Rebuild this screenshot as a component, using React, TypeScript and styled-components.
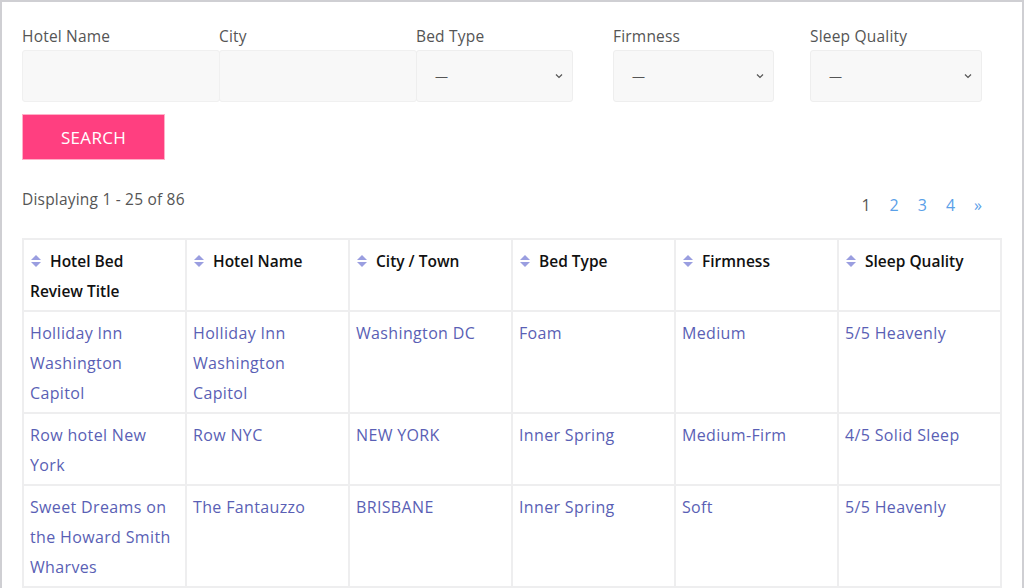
import * as React from 'react'
import styled, { createGlobalStyle } from 'styled-components'

const Global = createGlobalStyle`
  html, body { margin: 0; padding: 0; background: #fff; }
  body { font-family: "Open Sans", "Noto Sans", sans-serif; }
`

const Frame = styled.div`
  width: 1024px;
  height: 588px;
  box-sizing: border-box;
  border: 2px solid #cfcfd3;
  border-bottom: none;
  padding: 20px 20px 0 20px;
  overflow: hidden;
`

const Filters = styled.div`
  display: grid;
  grid-template-columns: repeat(5, 197px);
`

const Field = styled.div`
  display: flex;
  flex-direction: column;
`

const Label = styled.label`
  font-size: 15.5px;
  letter-spacing: 0.2px;
  color: #555;
  height: 28px;
  line-height: 28px;
`

const TextInput = styled.div`
  height: 52px;
  width: 198px;
  background: #f8f8f8;
  border: 1px solid #f0f0f0;
  border-radius: 3px;
  box-sizing: border-box;
`

const Select = styled.div<{ $w: number }>`
  height: 52px;
  width: ${p => p.$w}px;
  background: #f8f8f8;
  border: 1px solid #eee;
  border-radius: 3px;
  box-sizing: border-box;
  display: flex;
  align-items: center;
  justify-content: space-between;
  padding: 0 8px 0 18px;
  color: #555;
  font-size: 13px;
`

const SearchButton = styled.button`
  margin-top: 12px;
  width: 143px;
  height: 46px;
  background: #ff3f80;
  color: #fff;
  border: 1px solid #ffb0c8;
  font-family: inherit;
  font-size: 17px;
  font-weight: 500;
  letter-spacing: 0.3px;
`

const InfoRow = styled.div`
  display: flex;
  justify-content: space-between;
  align-items: flex-start;
  margin-top: 28px;
  width: 960px;
`

const Info = styled.div`
  font-size: 15.5px;
  letter-spacing: 0.2px;
  color: #555;
`

const Pager = styled.div`
  display: flex;
  gap: 19px;
  margin-top: 6px;
  font-size: 16px;
`

const Page = styled.span<{ $current?: boolean }>`
  color: ${p => (p.$current ? '#555' : '#5aa0e8')};
`

const Table = styled.table`
  margin-top: 22px;
  width: 980px;
  border-collapse: collapse;
  table-layout: fixed;
`

const Th = styled.th`
  border: 2px solid #eeeeef;
  text-align: left;
  vertical-align: top;
  padding: 6px 6px 4px 6px;
  font-size: 15.5px;
  font-weight: 600;
  color: #111;
  line-height: 30px;
  height: 71px;
  box-sizing: border-box;
`

const Td = styled.td`
  border: 2px solid #eeeeef;
  vertical-align: top;
  padding: 6px 6px 4px 6px;
  font-size: 16px;
  letter-spacing: 0.35px;
  line-height: 30px;
  color: #5a5fb5;
`

const SortIcon = () => (
  <svg width="12" height="14" viewBox="0 0 12 14" style={{ marginRight: 8, verticalAlign: '-1px' }}>
    <path d="M1 6 L6 1 L11 6 Z" fill="#9a9ee0" />
    <path d="M1 8 L6 13 L11 8 Z" fill="#9a9ee0" />
  </svg>
)

const Chevron = () => (
  <svg width="10" height="10" viewBox="0 0 10 10">
    <path d="M2 3.5 L5 6.5 L8 3.5" stroke="#555" strokeWidth="1.2" fill="none" />
  </svg>
)

const headers = ['Hotel Bed Review Title', 'Hotel Name', 'City / Town', 'Bed Type', 'Firmness', 'Sleep Quality']
const rows = [
  ['Holliday Inn Washington Capitol', 'Holliday Inn Washington Capitol', 'Washington DC', 'Foam', 'Medium', '5/5 Heavenly'],
  ['Row hotel New York', 'Row NYC', 'NEW YORK', 'Inner Spring', 'Medium-Firm', '4/5 Solid Sleep'],
  ['Sweet Dreams on the Howard Smith Wharves', 'The Fantauzzo', 'BRISBANE', 'Inner Spring', 'Soft', '5/5 Heavenly'],
]

export default function App() {
  return (
    <>
      <Global />
      <Frame>
        <Filters>
          <Field><Label>Hotel Name</Label><TextInput /></Field>
          <Field><Label>City</Label><TextInput /></Field>
          <Field><Label>Bed Type</Label><Select $w={157}>—<Chevron /></Select></Field>
          <Field><Label>Firmness</Label><Select $w={161}>—<Chevron /></Select></Field>
          <Field><Label>Sleep Quality</Label><Select $w={172}>—<Chevron /></Select></Field>
        </Filters>
        <SearchButton>SEARCH</SearchButton>
        <InfoRow>
          <Info>Displaying 1 - 25 of 86</Info>
          <Pager>
            <Page $current>1</Page>
            <Page>2</Page>
            <Page>3</Page>
            <Page>4</Page>
            <Page>»</Page>
          </Pager>
        </InfoRow>
        <Table>
          <thead>
            <tr>{headers.map(h => <Th key={h}><SortIcon />{h}</Th>)}</tr>
          </thead>
          <tbody>
            {rows.map((r, i) => (
              <tr key={i}>{r.map((c, j) => <Td key={j}>{c}</Td>)}</tr>
            ))}
          </tbody>
        </Table>
      </Frame>
    </>
  )
}
